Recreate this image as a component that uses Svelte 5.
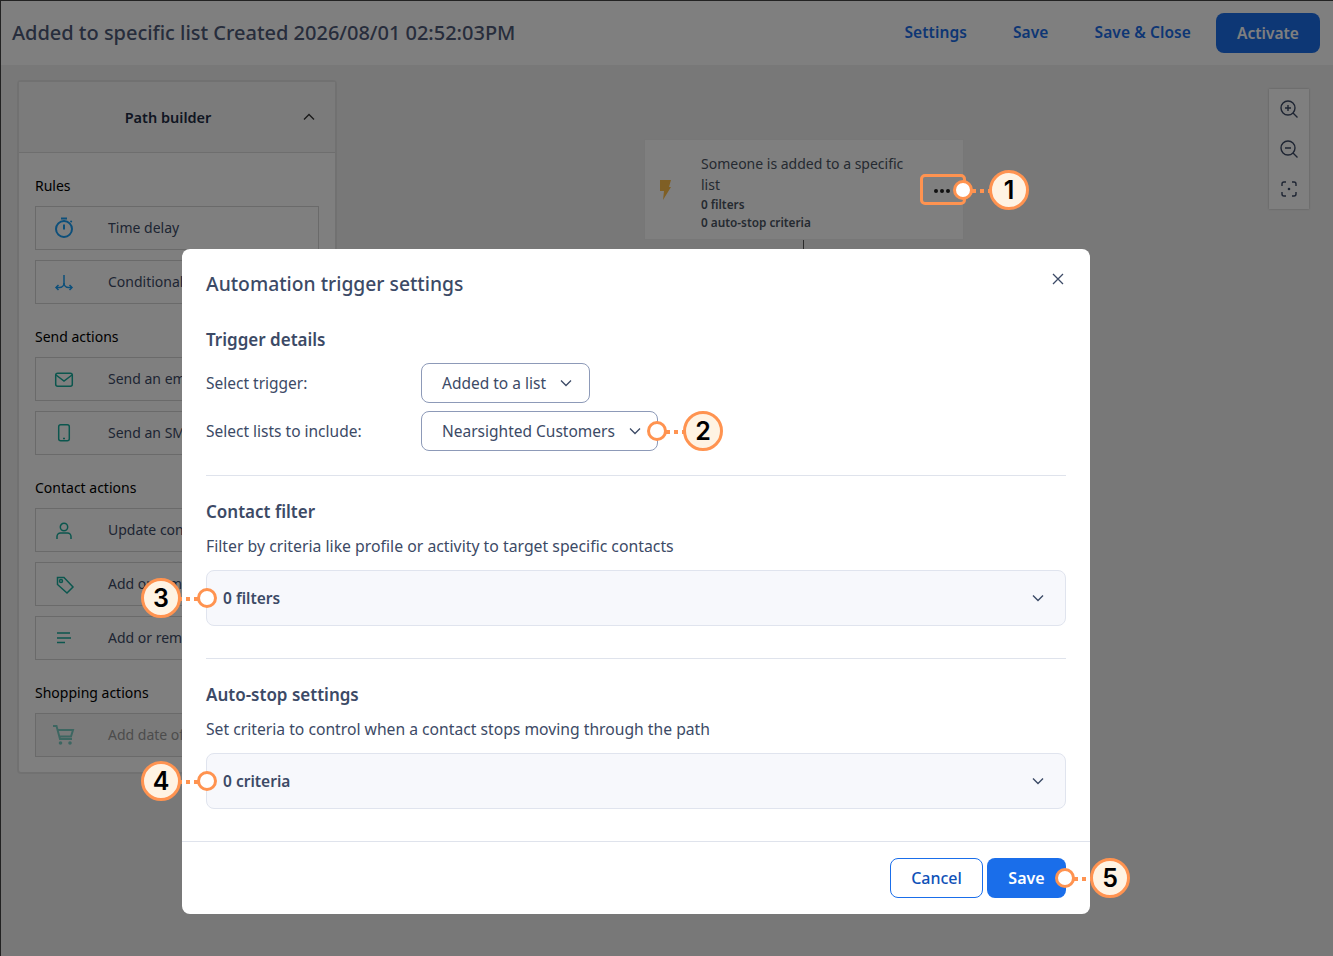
<script>
  const groups = [
    { title: 'Rules', items: [
      { label: 'Time delay', icon: 'timer', blue: true },
      { label: 'Conditional split', icon: 'split', blue: true }
    ]},
    { title: 'Send actions', items: [
      { label: 'Send an email', icon: 'mail' },
      { label: 'Send an SMS', icon: 'phone' }
    ]},
    { title: 'Contact actions', items: [
      { label: 'Update contact details', icon: 'user' },
      { label: 'Add or remove tags', icon: 'tag' },
      { label: 'Add or remove lists', icon: 'lines' }
    ]},
    { title: 'Shopping actions', items: [
      { label: 'Add date of purchase', icon: 'cart', off: true }
    ]}
  ];
  const marks = [
    { n: 1, cx: 1009, cy: 190, dx: 963, dy: 190 },
    { n: 2, cx: 703, cy: 431, dx: 657, dy: 431 },
    { n: 3, cx: 161, cy: 598, dx: 207, dy: 598 },
    { n: 4, cx: 161, cy: 781, dx: 207, dy: 781 },
    { n: 5, cx: 1110, cy: 878, dx: 1065, dy: 878 }
  ];
</script>

<div class="page">
  <header class="top">
    <h1>Added to specific list Created 2026/08/01 02:52:03PM</h1>
    <nav class="actions">
      <span class="link">Settings</span>
      <span class="link">Save</span>
      <span class="link">Save &amp; Close</span>
      <span class="activate">Activate</span>
    </nav>
  </header>

  <div class="work">
    <aside class="side">
      <div class="side-head">
        <span>Path builder</span>
        <svg class="side-caret" viewBox="0 0 12 8" width="12" height="8"><path d="M1 6.500 6 1.500l5 5" fill="none" stroke="currentColor" stroke-width="1.300"/></svg>
      </div>
      <div class="side-body">
        {#each groups as g}
          <section class="group">
            <h3>{g.title}</h3>
            {#each g.items as it}
              <div class="item" class:off={it.off}>
                <span class="item-icon" class:blue={it.blue}>
                  <svg viewBox="0 0 24 24" width="24" height="24" fill="none" stroke="currentColor" stroke-width="1.500">
                    {#if it.icon === 'timer'}
                      <circle cx="12" cy="13" r="8" stroke-width="2"/><path d="M9 2.500h6" stroke-width="2"/><path d="M12 8.500v5" stroke-width="2"/><path d="m18.500 6 1.200-1.200" stroke-width="1.800"/>
                    {:else if it.icon === 'split'}
                      <path d="M12 5v8c0 2.500-2 4.500-4.500 4.500H4"/><path d="M12 13c0 2.500 2 4.500 4.500 4.500H20"/><path d="M6.500 15 4 17.500 6.500 20M17.500 15 20 17.500 17.500 20"/>
                    {:else if it.icon === 'mail'}
                      <rect x="3.700" y="6.200" width="16.600" height="13.100" rx="2"/><path d="m4 8 8 6 8-6"/>
                    {:else if it.icon === 'phone'}
                      <rect x="6.700" y="3.700" width="10.600" height="16" rx="2"/><path d="M11 17.500h2"/>
                    {:else if it.icon === 'user'}
                      <circle cx="12" cy="9" r="3.700"/><path d="M5 21v-2.500A3.500 3.500 0 0 1 8.500 15h7a3.500 3.500 0 0 1 3.500 3.500V21"/>
                    {:else if it.icon === 'tag'}
                      <path d="M5.500 5.500h6.500l9 9.500-6 6-9.500-8.500z"/><circle cx="9" cy="9" r="1.500"/>
                    {:else if it.icon === 'lines'}
                      <path d="M5 7h13M5 12h14M5 16.500h8" stroke-width="1.300"/>
                    {:else}
                      <path d="M1 3h3.500l3.500 13h12M6 7h15l-2 6.500H7.500" stroke-width="2"/><circle cx="8.500" cy="20" r="1.800" fill="currentColor" stroke="none"/><circle cx="18" cy="20" r="1.800" fill="currentColor" stroke="none"/>
                    {/if}
                  </svg>
                </span>
                <span class="item-label">{it.label}</span>
              </div>
            {/each}
          </section>
        {/each}
      </div>
    </aside>

    <div class="canvas">
      <div class="node">
        <svg class="bolt" viewBox="0 0 11 20" width="11" height="20"><path d="M0 0h11L9 7h2L3 20l1-9H0z" fill="#ffbe4a"/></svg>
        <div class="node-text">
          <div class="node-title">Someone is added to a specific list</div>
          <div class="node-meta">0 filters</div>
          <div class="node-meta">0 auto-stop criteria</div>
        </div>
        <span class="more"><i></i><i></i><i></i></span>
      </div>
      <div class="line"></div>
      <div class="zoomer">
        <svg viewBox="0 0 20 20" width="20" height="20" fill="none" stroke="currentColor" stroke-width="1.400"><circle cx="9" cy="9" r="7"/><path d="m14 14 4.500 4.500M6 9h6M9 6v6"/></svg>
        <svg viewBox="0 0 20 20" width="20" height="20" fill="none" stroke="currentColor" stroke-width="1.400"><circle cx="9" cy="9" r="7"/><path d="m14 14 4.500 4.500M6 9h6"/></svg>
        <svg viewBox="0 0 20 20" width="20" height="20" fill="none" stroke="currentColor" stroke-width="1.400"><path d="M3 7V5a2 2 0 0 1 2-2h2M13 3h2a2 2 0 0 1 2 2v2M17 13v2a2 2 0 0 1-2 2h-2M7 17H5a2 2 0 0 1-2-2v-2"/><circle cx="10" cy="10" r="1.300" fill="currentColor" stroke="none"/></svg>
      </div>
    </div>
  </div>

  <div class="backdrop"></div>

  <div class="modal">
    <div class="modal-head">
      <h2>Automation trigger settings</h2>
      <svg class="close" viewBox="0 0 12 12" width="12" height="12"><path d="m1 1 10 10M11 1 1 11" stroke="currentColor" stroke-width="1.300" fill="none"/></svg>
    </div>
    <div class="modal-body">
      <section class="sec first">
        <h4>Trigger details</h4>
        <div class="field">
          <span class="field-label">Select trigger:</span>
          <span class="select">Added to a list
            <svg viewBox="0 0 12 8" width="12" height="8"><path d="m1 1.500 5 5 5-5" fill="none" stroke="currentColor" stroke-width="1.300"/></svg>
          </span>
        </div>
        <div class="field">
          <span class="field-label">Select lists to include:</span>
          <span class="select wide">Nearsighted Customers
            <svg viewBox="0 0 12 8" width="12" height="8"><path d="m1 1.500 5 5 5-5" fill="none" stroke="currentColor" stroke-width="1.300"/></svg>
          </span>
        </div>
      </section>
      <section class="sec">
        <h4>Contact filter</h4>
        <p class="p1">Filter by criteria like profile or activity to target specific contacts</p>
        <div class="accordion">
          <span>0 filters</span>
          <svg viewBox="0 0 12 8" width="12" height="8"><path d="m1 1.500 5 5 5-5" fill="none" stroke="currentColor" stroke-width="1.400"/></svg>
        </div>
      </section>
      <section class="sec">
        <h4>Auto-stop settings</h4>
        <p>Set criteria to control when a contact stops moving through the path</p>
        <div class="accordion">
          <span>0 criteria</span>
          <svg viewBox="0 0 12 8" width="12" height="8"><path d="m1 1.500 5 5 5-5" fill="none" stroke="currentColor" stroke-width="1.400"/></svg>
        </div>
      </section>
    </div>
    <footer class="modal-foot">
      <span class="btn ghost">Cancel</span>
      <span class="btn solid">Save</span>
    </footer>
  </div>

  <div class="focus-box"></div>
  {#each marks as m}
    <span class="dots" style="left:{Math.min(m.cx, m.dx)}px;top:{m.cy - 2}px;width:{Math.abs(m.cx - m.dx)}px"></span>
    <span class="dot" style="left:{m.dx - 10}px;top:{m.dy - 10}px"></span>
    <span class="num" style="left:{m.cx - 20}px;top:{m.cy - 20}px">{m.n}</span>
  {/each}
</div>

<style>
  :global(body) { margin: 0; }
  * { box-sizing: border-box; }
  .page {
    position: relative;
    width: 1333px;
    height: 956px;
    overflow: hidden;
    background: #f0f0f0;
    border: 1px solid #222;
    border-right: 0;
    border-bottom: 0;
    font-family: "Noto Sans", "Open Sans", sans-serif;
    color: #3c4a66;
  }
  .top {
    height: 64px;
    background: #fff;
    display: flex;
    align-items: center;
    justify-content: space-between;
    padding: 0 13px 2px 11px;
  }
  h1 { margin: 0; font-size: 20px; font-weight: 500; color: #4e5a78; letter-spacing: -0.02px; }
  .actions { display: flex; align-items: center; margin-top: 2px; }
  .link { font-size: 15.500px; font-weight: 600; color: #1b6de8; margin-right: 46px; letter-spacing: 0.1px; position: relative; top: -1px; }
  .activate {
    width: 104px; height: 40px; border-radius: 8px; background: #1a6eea; color: #fff;
    display: flex; align-items: center; justify-content: center;
    font-size: 15.500px; font-weight: 600; margin-left: -21px;
  }
  .work { display: flex; }
  .side {
    width: 320px; height: 694px; margin: 15px 0 0 16px; background: #fff;
    border: 2px solid #e3e3e3; border-radius: 4px; flex: none;
  }
  .side-head {
    height: 71px; display: flex; align-items: center; justify-content: center;
    position: relative; border-bottom: 1px solid #ddd; background: #f7f7f7;
    font-size: 14.500px; font-weight: 600; color: #1f2d45; padding-right: 18px;
  }
  .side-caret { position: absolute; right: 20px; color: #333; }
  .side-body { padding: 23px 16px 0; }
  .group { margin-bottom: 23px; }
  .group h3 { margin: 0 0 10px; font-size: 14px; line-height: 20px; font-weight: 400; color: #000; }
  .item {
    height: 44px; margin-bottom: 10px; display: flex; align-items: center;
    border: 1px solid #d5d5d5; background: #fff; font-size: 14px; color: #3c4a66;
    white-space: nowrap;
  }
  .item-label { padding-bottom: 2px; }
  .group .item:last-child { margin-bottom: 0; }
  .item-icon { width: 72px; padding-left: 16px; display: flex; color: #18ad9c; flex: none; }
  .item-icon.blue { color: #1a9ef5; }
  .item.off { background: #f5f5f5; color: #999; }
  .item.off .item-icon { opacity: .55; }

  .canvas { position: relative; flex: 1; }
  .node {
    position: absolute; left: 307px; top: 74px; width: 320px; height: 101px;
    background: #fff; border: 1px solid #eee; display: flex; align-items: center;
    padding-left: 15px; color: #4b5563;
  }
  .bolt { flex: none; margin-right: 30px; }
  .node-text { width: 215px; padding-top: 4px; }
  .node-title { font-size: 14px; line-height: 21px; }
  .node-meta { font-size: 11.800px; font-weight: 600; line-height: 18px; }
  .more { position: absolute; left: 289px; top: 49px; display: flex; gap: 2px; }
  .more i { width: 4px; height: 4px; border-radius: 50%; background: #222; }
  .line { position: absolute; left: 466px; top: 175px; width: 1px; height: 30px; background: #555; }
  .zoomer {
    position: absolute; right: 24px; top: 24px; width: 40px; height: 120px; background: #fff;
    box-shadow: 0 0 2px rgba(0,0,0,.25); display: flex; flex-direction: column;
    align-items: center; justify-content: space-around; padding: 0; color: #3c4a66;
  }

  .backdrop { position: absolute; inset: 0; background: rgba(0,0,0,.5); }

  .modal {
    position: absolute; left: 181px; top: 248px; width: 908px; height: 665px;
    background: #fff; border-radius: 8px; display: flex; flex-direction: column;
  }
  .modal-head { height: 60px; padding: 0 24px; display: flex; align-items: center; justify-content: space-between; position: relative; flex: none; }
  h2 { margin: 9px 0 0; font-size: 19.300px; font-weight: 500; color: #3c4a66; }
  .close { position: absolute; right: 26px; top: 24px; color: #3c4a66; }
  .modal-body { flex: 1; padding: 0 24px; }
  .sec { border-top: 1px solid #dfe3ec; padding-top: 23px; height: 183px; }
  .sec.first { border-top: 0; padding-top: 18px; height: 166px; }
  h4 { margin: 0; font-size: 17px; line-height: 26px; font-weight: 600; color: #3c4a66; }
  .sec p { margin: 9px 0 0; font-size: 15.700px; line-height: 24px; color: #3c4a66; }
  .sec p.p1 { font-size: 15.800px; }
  .field { display: flex; align-items: center; height: 40px; margin-top: 8px; font-size: 15.500px; }
  .sec.first h4 + .field { margin-top: 10px; }
  .field-label { width: 215px; flex: none; }
  .select {
    height: 40px; border: 1px solid #8d9ab8; border-radius: 8px; display: inline-flex; align-items: center;
    gap: 14px; padding: 0 17px 0 20px; font-size: 15.500px; color: #3c4a66; white-space: nowrap;
  }
  .select.wide { padding-right: 16px; }
  .accordion {
    margin-top: 12px; height: 56px; border: 1px solid #e0e4ee; border-radius: 8px; background: #f7f8fc;
    display: flex; align-items: center; justify-content: space-between; padding: 0 21px 0 16px;
    font-size: 15.500px; font-weight: 600; color: #3c4a66;
  }
  .modal-foot {
    height: 73px; flex: none; border-top: 1px solid #dfe3ec; display: flex; justify-content: flex-end;
    align-items: flex-start; gap: 4px; padding: 16px 24px 0;
  }
  .btn { height: 40px; border-radius: 8px; display: flex; align-items: center; justify-content: center; font-size: 16px; font-weight: 500; }
  .ghost { width: 93px; border: 1px solid #1a6eea; color: #0f52b8; }
  .solid { width: 79px; background: #1a6eea; color: #fff; font-weight: 600; }

  .focus-box { position: absolute; left: 919px; top: 173px; width: 46px; height: 31px; border: 3px solid #ff9350; border-radius: 5px; }
  .dots {
    position: absolute; height: 4px;
    background: repeating-linear-gradient(90deg, #ff9350 0 4px, transparent 4px 8px);
  }
  .dot {
    position: absolute; width: 20px; height: 20px; margin: -1px 0 0 -1px; border-radius: 50%; background: #fff; border: 3px solid #ff9350;
  }
  .num {
    position: absolute; width: 40px; height: 40px; margin: -1px 0 0 -1px; border-radius: 50%; background: #fff3e3; border: 3px solid #ff9350;
    display: flex; align-items: center; justify-content: center;
    font-family: Inter, sans-serif; font-size: 25px; font-weight: 600; color: #000;
  }
</style>
